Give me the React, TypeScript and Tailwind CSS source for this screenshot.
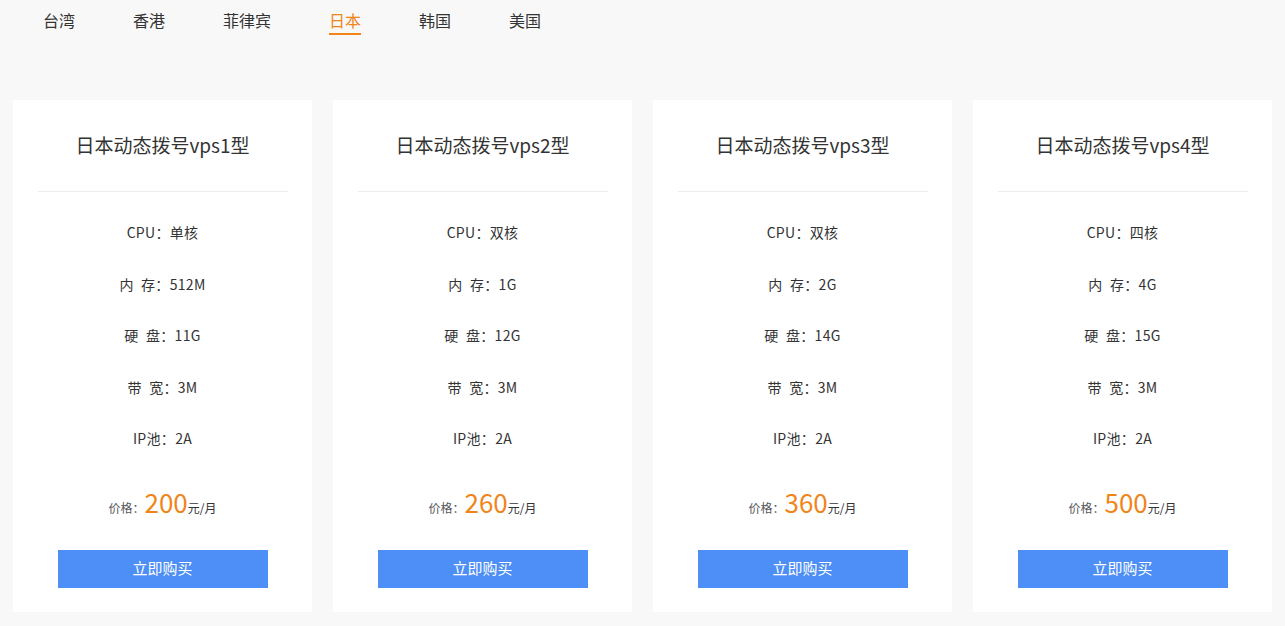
import React from "react";

const tabs = ["台湾", "香港", "菲律宾", "日本", "韩国", "美国"];

const plans = [
  { n: 1, cpu: "单核", mem: "512M", disk: "11G", price: "200" },
  { n: 2, cpu: "双核", mem: "1G", disk: "12G", price: "260" },
  { n: 3, cpu: "双核", mem: "2G", disk: "14G", price: "360" },
  { n: 4, cpu: "四核", mem: "4G", disk: "15G", price: "500" },
];

const font = { fontFamily: '"Noto Sans CJK SC", "Noto Sans", sans-serif' };

export default function App() {
  return (
    <div className="w-full h-[626px] bg-[#f8f8f8] text-[#333]" style={font}>
      <div className="flex gap-[58px] pl-[43px] pt-[8px]">
        {tabs.map((t) => (
          <div
            key={t}
            className={
              t === "日本"
                ? "text-[16px] leading-[24px] pb-[1px] border-b-2 border-[#f08519] text-[#f08519]"
                : "text-[16px] leading-[24px] pb-[1px] border-b-2 border-transparent text-[#333]"
            }
          >
            {t}
          </div>
        ))}
      </div>
      <div className="flex gap-[21px] pl-[13px] mt-[65px]">
        {plans.map((p) => (
          <div key={p.n} className="w-[299px] h-[512px] bg-white flex flex-col items-center">
            <div className="pt-[31px] text-[19px] leading-[28px] text-[#333]">
              日本动态拨号vps{p.n}型
            </div>
            <div className="mt-[32px] w-[250px] h-px bg-[#ececec]" />
            <div className="mt-[15px] flex flex-col items-center text-[14px] tracking-[0.3px] text-[#333]">
              <div className="h-[51.5px] flex items-center">CPU：{p.cpu}</div>
              <div className="h-[51.5px] flex items-center">内{"\u2002"}存：{p.mem}</div>
              <div className="h-[51.5px] flex items-center">硬{"\u2002"}盘：{p.disk}</div>
              <div className="h-[51.5px] flex items-center">带{"\u2002"}宽：3M</div>
              <div className="h-[51.5px] flex items-center">IP池：2A</div>
            </div>
            <div className="mt-[17px] h-[40px] flex items-baseline justify-center">
              <span className="text-[12px] text-[#555]">价格：</span>
              <span className="text-[26px] leading-[40px] text-[#f08519]">{p.price}</span>
              <span className="text-[12px] text-[#333]">元/月</span>
            </div>
            <button className="mt-[28px] w-[210px] h-[38px] bg-[#4e8ef7] text-white text-[15px]">
              立即购买
            </button>
          </div>
        ))}
      </div>
    </div>
  );
}
